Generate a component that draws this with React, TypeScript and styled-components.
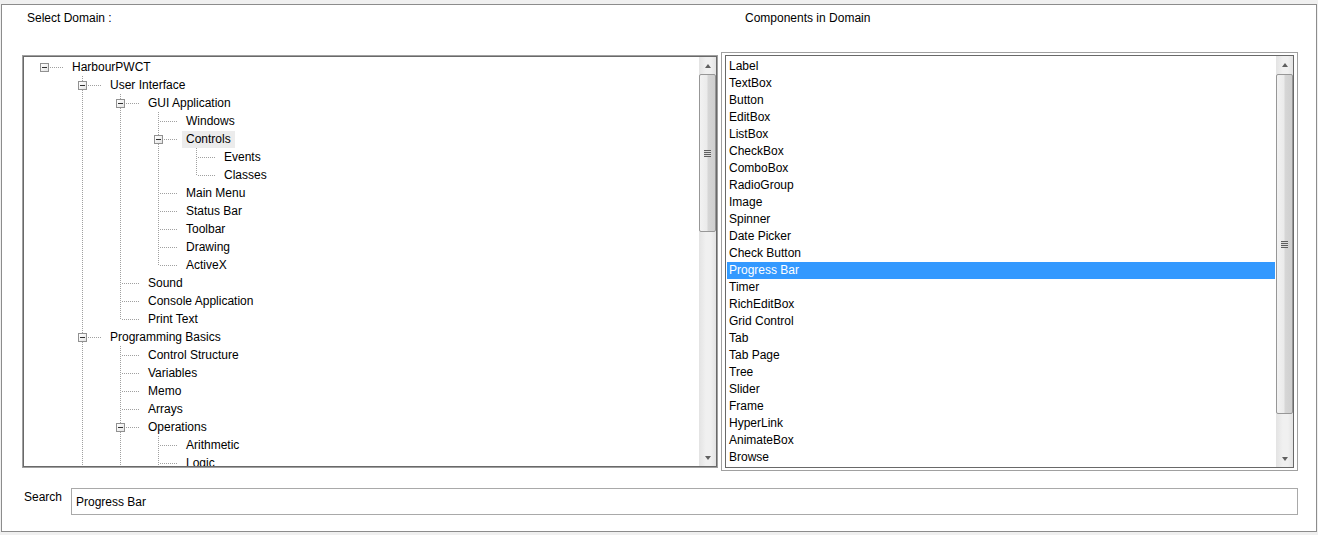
import styled, { createGlobalStyle } from 'styled-components';

// === STYLES ===

const GlobalStyle = createGlobalStyle`
  html, body {
    margin: 0;
    padding: 0;
    background: #f0f0f0;
  }
  body {
    font-family: "Liberation Sans", Arial, sans-serif;
    font-size: 12px;
    color: #000;
  }
  * {
    box-sizing: border-box;
  }
`;

const Window = styled.div`
  margin: 4px 0 0 1px;
  width: 1316px;
  height: 528px;
  border: 1px solid #8c8c8c;
  background: #fff;
  display: flex;
  flex-direction: column;
`;

const Main = styled.div`
  display: flex;
  padding-left: 20px;
`;

const Column = styled.div<{ $width: number; $gap?: number }>`
  width: ${p => p.$width}px;
  margin-left: ${p => p.$gap ?? 0}px;
  display: flex;
  flex-direction: column;
`;

const Caption = styled.div<{ $indent: number }>`
  margin: 6px 0 0 ${p => p.$indent}px;
  line-height: 14px;
  height: 14px;
  white-space: nowrap;
`;

const SunkenBox = styled.div<{ $top: number; $height: number }>`
  margin-top: ${p => p.$top}px;
  height: ${p => p.$height}px;
  border: 1px solid #a0a0a0;
  display: flex;
`;

const SunkenInner = styled.div`
  flex: 1;
  border: 1px solid #696969;
  display: flex;
  overflow: hidden;
  background: #fff;
`;

const ListFrame = styled.div`
  margin-top: 27px;
  height: 419px;
  border: 1px solid #a0a0a0;
  padding: 2px 3px 2px 3px;
  display: flex;
`;

const Viewport = styled.div<{ $padTop: number; $padLeft: number }>`
  flex: 1;
  overflow: hidden;
  padding: ${p => p.$padTop}px 0 0 ${p => p.$padLeft}px;
`;

// --- tree ---

const dotsV = `linear-gradient(to bottom, #a0a0a0 50%, transparent 50%)`;
const dotsH = `linear-gradient(to right, #a0a0a0 50%, transparent 50%)`;

const TreeRow = styled.div`
  height: 18px;
  display: flex;
  align-items: center;
  white-space: nowrap;
`;

const Guide = styled.div<{ $line: boolean }>`
  width: 38px;
  height: 18px;
  flex: none;
  position: relative;

  &::before {
    content: '';
    display: ${p => (p.$line ? 'block' : 'none')};
    position: absolute;
    left: 19px;
    top: 0;
    width: 1px;
    height: 18px;
    background-image: ${dotsV};
    background-size: 1px 2px;
  }
`;

const Connector = styled.div<{ $up: boolean; $down: boolean }>`
  width: 38px;
  height: 18px;
  flex: none;
  position: relative;

  &::before {
    content: '';
    display: ${p => (p.$up || p.$down ? 'block' : 'none')};
    position: absolute;
    left: 19px;
    top: ${p => (p.$up ? 0 : 9)}px;
    width: 1px;
    height: ${p => (p.$up && p.$down ? 18 : 9)}px;
    background-image: ${dotsV};
    background-size: 1px 2px;
  }

  &::after {
    content: '';
    position: absolute;
    left: 20px;
    top: 9px;
    width: 18px;
    height: 1px;
    background-image: ${dotsH};
    background-size: 2px 1px;
    background-position: 1px 0;
  }
`;

const Expander = styled.div`
  position: absolute;
  left: 15px;
  top: 5px;
  width: 9px;
  height: 9px;
  border: 1px solid #919191;
  background: linear-gradient(to bottom right, #ffffff, #e4e4e4);
  z-index: 1;

  &::after {
    content: '';
    position: absolute;
    left: 1px;
    top: 3px;
    width: 5px;
    height: 1px;
    background: #303030;
  }
`;

const NodeText = styled.span<{ $active?: boolean }>`
  margin-left: ${p => (p.$active ? 5 : 9)}px;
  padding: ${p => (p.$active ? '1px 4px 2px' : '0')};
  background: ${p => (p.$active ? '#ececec' : 'transparent')};
  line-height: 14px;
`;

// --- list ---

const ListItem = styled.div<{ $selected?: boolean }>`
  height: 17px;
  line-height: 17px;
  padding-left: 2px;
  width: 548px;
  white-space: nowrap;
  background: ${p => (p.$selected ? '#3399ff' : 'transparent')};
  color: ${p => (p.$selected ? '#fff' : '#000')};
`;

// --- scrollbar ---

const ScrollBar = styled.div`
  width: 17px;
  flex: none;
  display: flex;
  flex-direction: column;
  background: linear-gradient(to right, #e3e3e3, #f0f0f0 40%, #f0f0f0 70%, #e3e3e3);
`;

const Arrow = styled.div<{ $dir: 'up' | 'down' }>`
  height: 17px;
  flex: none;
  display: flex;
  align-items: center;
  justify-content: center;

  &::after {
    content: '';
    width: 0;
    height: 0;
    border-left: 3.5px solid transparent;
    border-right: 3.5px solid transparent;
    ${p =>
      p.$dir === 'up'
        ? 'border-bottom: 4px solid #606060;'
        : 'border-top: 4px solid #606060;'}
  }
`;

const Track = styled.div`
  flex: 1;
  position: relative;
`;

const Thumb = styled.div`
  position: absolute;
  left: 0;
  right: 0;
  border: 1px solid #979797;
  border-radius: 2px;
  background: linear-gradient(to right, #f2f2f2, #ebebeb 45%, #d6d6d6 55%, #cfcfcf);
  display: flex;
  align-items: center;
  justify-content: center;
`;

const Grip = styled.div`
  width: 7px;
  height: 7px;
  background-image: linear-gradient(to bottom, #5f5f5f 1px, #dcdcdc 1px, #dcdcdc 2px);
  background-size: 7px 2px;
`;

// --- search ---

const SearchRow = styled.div`
  display: flex;
  align-items: flex-start;
  margin-top: 17px;
  padding-left: 22px;
`;

const SearchLabel = styled.div`
  width: 47px;
  line-height: 14px;
  margin-top: 2px;
`;

const SearchInput = styled.input`
  width: 1227px;
  height: 27px;
  border: 1px solid #a9a9a9;
  padding: 0 0 0 4px;
  font: inherit;
  font-size: 12px;
  color: #000;
  outline: none;
  background: #fff;
`;

// === DATA ===

type Node = { label: string; level: number; open?: boolean; active?: boolean };

const tree: Node[] = [
  { label: 'HarbourPWCT', level: 0, open: true },
  { label: 'User Interface', level: 1, open: true },
  { label: 'GUI Application', level: 2, open: true },
  { label: 'Windows', level: 3 },
  { label: 'Controls', level: 3, open: true, active: true },
  { label: 'Events', level: 4 },
  { label: 'Classes', level: 4 },
  { label: 'Main Menu', level: 3 },
  { label: 'Status Bar', level: 3 },
  { label: 'Toolbar', level: 3 },
  { label: 'Drawing', level: 3 },
  { label: 'ActiveX', level: 3 },
  { label: 'Sound', level: 2 },
  { label: 'Console Application', level: 2 },
  { label: 'Print Text', level: 2 },
  { label: 'Programming Basics', level: 1, open: true },
  { label: 'Control Structure', level: 2 },
  { label: 'Variables', level: 2 },
  { label: 'Memo', level: 2 },
  { label: 'Arrays', level: 2 },
  { label: 'Operations', level: 2, open: true },
  { label: 'Arithmetic', level: 3 },
  { label: 'Logic', level: 3 },
  { label: 'Comparison', level: 3 },
  { label: 'Functions', level: 2 },
  { label: 'Data Files', level: 1 },
];

const components = [
  'Label', 'TextBox', 'Button', 'EditBox', 'ListBox', 'CheckBox', 'ComboBox',
  'RadioGroup', 'Image', 'Spinner', 'Date Picker', 'Check Button', 'Progress Bar',
  'Timer', 'RichEditBox', 'Grid Control', 'Tab', 'Tab Page', 'Tree', 'Slider',
  'Frame', 'HyperLink', 'AnimateBox', 'Browse',
];

// a line continues at depth d when a later row sits at level d before one above it
function continues(index: number, depth: number) {
  for (let j = index + 1; j < tree.length; j++) {
    if (tree[j].level < depth) return false;
    if (tree[j].level === depth) return true;
  }
  return false;
}

// === COMPONENTS ===

function Scroller({ top, height }: { top: number; height: number }) {
  return (
    <ScrollBar>
      <Arrow $dir="up" />
      <Track>
        <Thumb style={{ top, height }}>
          <Grip />
        </Thumb>
      </Track>
      <Arrow $dir="down" />
    </ScrollBar>
  );
}

function TreeNode({ node, index }: { node: Node; index: number }) {
  const guides = [];
  for (let d = 0; d < node.level; d++) {
    guides.push(<Guide key={d} $line={d > 0 && continues(index, d)} />);
  }
  return (
    <TreeRow>
      {guides}
      <Connector $up={node.level > 0} $down={node.level > 0 && continues(index, node.level)}>
        {node.open && <Expander />}
      </Connector>
      <NodeText $active={node.active}>{node.label}</NodeText>
    </TreeRow>
  );
}

export default function App() {
  return (
    <>
      <GlobalStyle />
      <Window>
        <Main>
          <Column $width={696}>
            <Caption $indent={5}>Select Domain :</Caption>
            <SunkenBox $top={30} $height={413}>
              <SunkenInner>
                <Viewport $padTop={1} $padLeft={1}>
                  {tree.map((node, i) => (
                    <TreeNode key={node.label} node={node} index={i} />
                  ))}
                </Viewport>
                <Scroller top={0} height={158} />
              </SunkenInner>
            </SunkenBox>
          </Column>

          <Column $width={577} $gap={3}>
            <Caption $indent={24}>Components in Domain</Caption>
            <ListFrame>
              <SunkenInner>
                <Viewport $padTop={2} $padLeft={1}>
                  {components.map(name => (
                    <ListItem key={name} $selected={name === 'Progress Bar'}>
                      {name}
                    </ListItem>
                  ))}
                </Viewport>
                <Scroller top={1} height={340} />
              </SunkenInner>
            </ListFrame>
          </Column>
        </Main>

        <SearchRow>
          <SearchLabel>Search</SearchLabel>
          <SearchInput defaultValue="Progress Bar" />
        </SearchRow>
      </Window>
    </>
  );
}
